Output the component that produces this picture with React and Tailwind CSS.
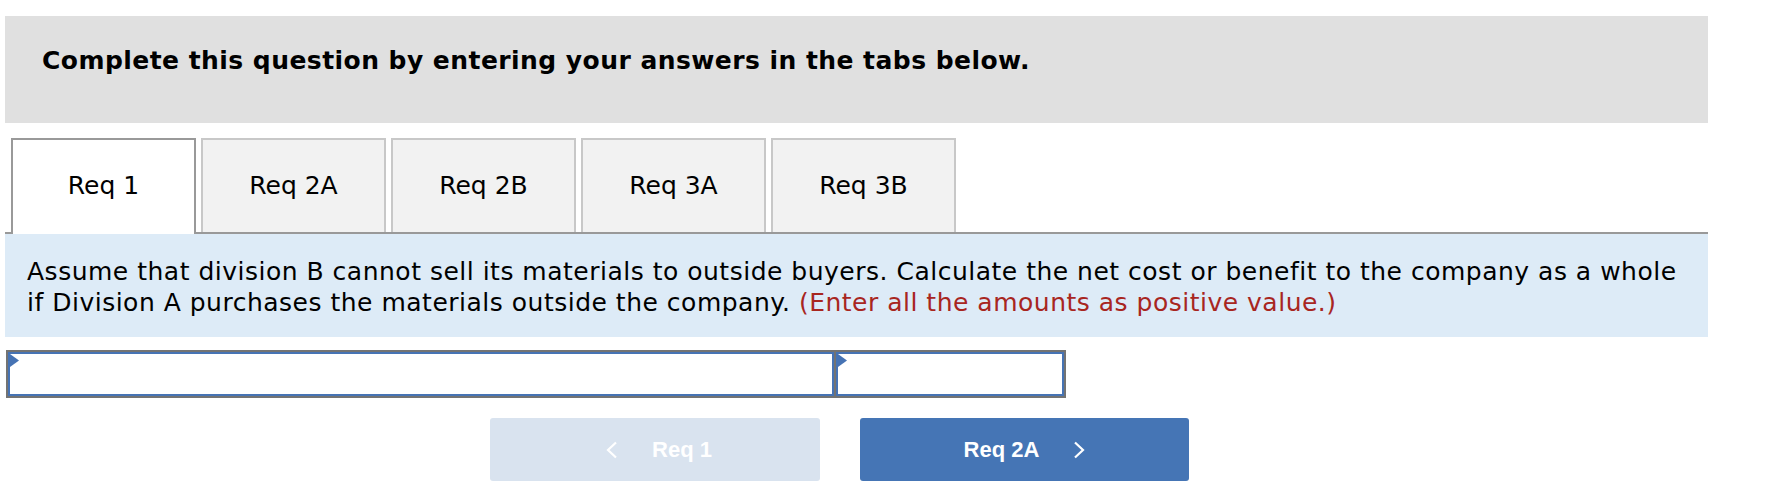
import React from "react";

const tabs = ["Req 1", "Req 2A", "Req 2B", "Req 3A", "Req 3B"];

function Chevron({ dir = "right" }) {
  return (
    <svg width="12" height="18" viewBox="0 0 12 18" className="shrink-0">
      <polyline
        points={dir === "right" ? "2,1.5 10,9 2,16.5" : "10,1.5 2,9 10,16.5"}
        fill="none"
        stroke="white"
        strokeWidth="2.2"
      />
    </svg>
  );
}

function Cell({ className }) {
  return (
    <div className={"relative h-full bg-white border-2 border-[#4673b4] " + className}>
      {/* little marker in the corner */}
      <svg width="9" height="13" viewBox="0 0 9 13" className="absolute left-0 top-0">
        <polygon points="0,0 9,6.5 0,13" fill="#4673b4" />
      </svg>
    </div>
  );
}

export default function App() {
  return (
    <div className="w-[1788px] h-[502px] bg-white pt-4 pl-[5px] font-['DejaVu_Sans',sans-serif] text-black">
      <div className="w-[1703px] h-[107px] bg-[#e0e0e0] pt-[30px] pl-[37px]">
        <h1 className="text-[25px] leading-[30px] font-bold tracking-[0.45px]">
          Complete this question by entering your answers in the tabs below.
        </h1>
      </div>

      <div className="w-[1703px] mt-[15px] flex items-start gap-[5px] pl-[6px] border-b-2 border-[#999]">
        {tabs.map((t, i) =>
          i === 0 ? (
            <div
              key={t}
              className="relative w-[185px] h-[96px] -mb-[2px] bg-white border-2 border-b-0 border-[#999] flex items-center justify-center text-[25px] pb-[2px]"
            >
              {t}
            </div>
          ) : (
            <div
              key={t}
              className="w-[185px] h-[94px] bg-[#f2f2f2] border-2 border-b-0 border-[#c8c8c8] flex items-center justify-center text-[25px]"
            >
              {t}
            </div>
          )
        )}
      </div>

      <div className="w-[1703px] h-[103px] bg-[#ddebf7] pt-[22px] pl-[22px] text-[25px] leading-[31px] tracking-[0.5px]">
        Assume that division B cannot sell its materials to outside buyers. Calculate the net cost or benefit to the company as a whole
        <br />
        if Division A purchases the materials outside the company.{" "}
        <span className="text-[#a8261f]">(Enter all the amounts as positive value.)</span>
      </div>

      <div className="mt-[13px] ml-px w-[1060px] h-[48px] bg-[#737373] p-[2px] flex gap-[2px]">
        <Cell className="w-[826px]" />
        <Cell className="flex-1" />
      </div>

      <div className="mt-5 pl-[485px] flex gap-10 font-['Liberation_Sans',Arial,sans-serif] font-bold text-[22px] text-white">
        <button className="w-[330px] h-[63px] rounded-[3px] bg-[#d9e3ef] flex items-center justify-center gap-[34px] pl-[8px]">
          <Chevron dir="left" />
          <span>Req 1</span>
        </button>
        <button className="w-[329px] h-[63px] rounded-[3px] bg-[#4575b5] flex items-center justify-center gap-[34px]">
          <span>Req 2A</span>
          <Chevron />
        </button>
      </div>
    </div>
  );
}
